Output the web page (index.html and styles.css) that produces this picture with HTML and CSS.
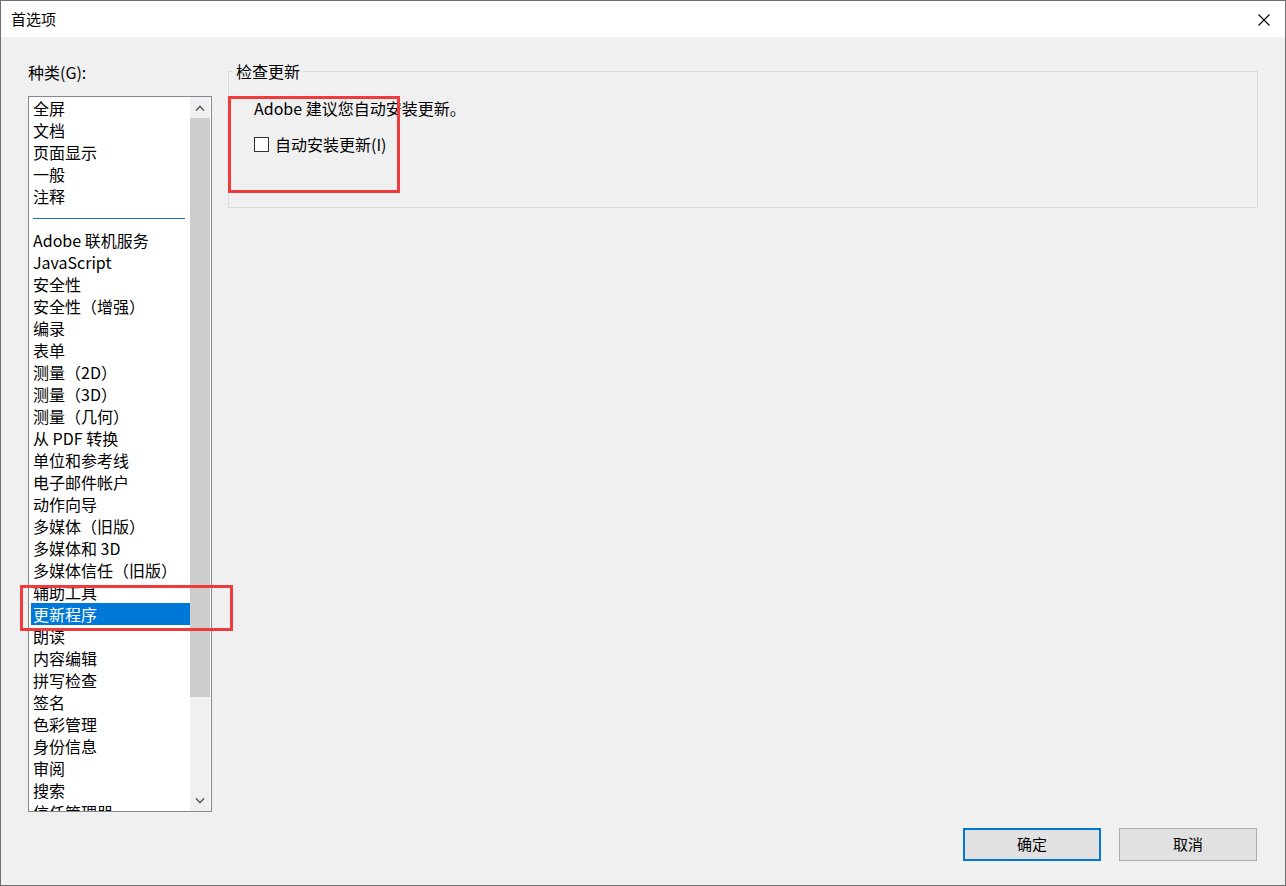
FILE: index.html
```html
<!DOCTYPE html>
<html lang="zh-CN">
<head>
    <meta charset="UTF-8">
    <title>首选项</title>
    <link rel="stylesheet" href="styles.css">
</head>
<body>
    <div class="window">
        <div class="titlebar">
            <span class="title">首选项</span>
            <svg class="close" width="12" height="12" viewBox="0 0 12 12">
                <path d="M0.5 0.5 L11.5 11.5 M11.5 0.5 L0.5 11.5" stroke="#000" stroke-width="1.1" fill="none"/>
            </svg>
        </div>

        <div class="main">
            <!-- category list -->
            <div class="left">
                <div class="label">种类(G):</div>
                <div class="listbox">
                    <div class="items">
                        <div class="item">全屏</div>
                        <div class="item">文档</div>
                        <div class="item">页面显示</div>
                        <div class="item">一般</div>
                        <div class="item">注释</div>
                        <div class="sep"></div>
                        <div class="item">Adobe 联机服务</div>
                        <div class="item">JavaScript</div>
                        <div class="item">安全性</div>
                        <div class="item">安全性（增强）</div>
                        <div class="item">编录</div>
                        <div class="item">表单</div>
                        <div class="item">测量（2D）</div>
                        <div class="item">测量（3D）</div>
                        <div class="item">测量（几何）</div>
                        <div class="item">从 PDF 转换</div>
                        <div class="item">单位和参考线</div>
                        <div class="item">电子邮件帐户</div>
                        <div class="item">动作向导</div>
                        <div class="item">多媒体（旧版）</div>
                        <div class="item">多媒体和 3D</div>
                        <div class="item">多媒体信任（旧版）</div>
                        <div class="item">辅助工具</div>
                        <div class="item selected">更新程序</div>
                        <div class="item">朗读</div>
                        <div class="item">内容编辑</div>
                        <div class="item">拼写检查</div>
                        <div class="item">签名</div>
                        <div class="item">色彩管理</div>
                        <div class="item">身份信息</div>
                        <div class="item">审阅</div>
                        <div class="item">搜索</div>
                        <div class="item">信任管理器</div>
                    </div>
                    <div class="scrollbar">
                        <div class="sb-btn">
                            <svg width="10" height="6" viewBox="0 0 10 6"><path d="M1 5.5 L5 1.5 L9 5.5" stroke="#606060" stroke-width="1.6" fill="none"/></svg>
                        </div>
                        <div class="sb-thumb"></div>
                        <div class="sb-track"></div>
                        <div class="sb-btn">
                            <svg width="10" height="6" viewBox="0 0 10 6"><path d="M1 0.5 L5 4.5 L9 0.5" stroke="#606060" stroke-width="1.6" fill="none"/></svg>
                        </div>
                    </div>
                </div>
            </div>

            <!-- settings panel -->
            <div class="right">
                <div class="group">
                    <span class="legend">检查更新</span>
                    <div class="line">Adobe 建议您自动安装更新。</div>
                    <label class="check">
                        <span class="box"></span>
                        <span>自动安装更新(I)</span>
                    </label>
                </div>
            </div>
        </div>

        <div class="footer">
            <button class="btn default">确定</button>
            <button class="btn">取消</button>
        </div>

        <!-- annotation marks -->
        <div class="mark mark-list"></div>
        <div class="mark mark-group"></div>
    </div>
</body>
</html>
```

FILE: styles.css
```css
* {
    margin: 0;
    padding: 0;
    box-sizing: border-box;
}

body {
    font-family: "Noto Sans CJK SC", "Noto Sans", sans-serif;
    font-size: 16px;
    color: #000;
    background: #f0f0f0;
}

.window {
    position: relative;
    width: 1286px;
    height: 886px;
    border: 1px solid #6f6f6f;
    background: #f0f0f0;
}

.titlebar {
    height: 36px;
    background: #fff;
    display: flex;
    align-items: center;
    justify-content: space-between;
    padding: 0 15px 0 10px;
}

.title {
    font-size: 15px;
    line-height: 20px;
}

.close {
    margin-top: 1px;
}

.main {
    display: flex;
    align-items: flex-start;
    height: 775px;
    padding-left: 27px;
}

/* left column */
.left {
    padding-top: 24px;
    width: 184px;
}

.label {
    line-height: 22px;
    margin-bottom: 13px;
}

.listbox {
    display: flex;
    height: 716px;
    border: 1px solid #828790;
    background: #fff;
    overflow: hidden;
}

.items {
    flex: 1;
    padding-left: 1px;
    overflow: hidden;
}

.item {
    height: 22px;
    line-height: 22px;
    padding-left: 3px;
    white-space: nowrap;
}

.item.selected {
    background: #0078d7;
    color: #fff;
    margin-left: 1px;
    padding-left: 2px;
}

.sep {
    height: 22px;
    display: flex;
    align-items: center;
    padding: 0 3px 0 3px;
}

.sep::before {
    content: "";
    display: block;
    width: 152px;
    height: 1px;
    background: #1c6fc0;
}

.scrollbar {
    width: 20px;
    margin-right: 1px;
    display: flex;
    flex-direction: column;
    background: #f0f0f0;
}

.sb-btn {
    height: 21px;
    display: flex;
    align-items: center;
    justify-content: center;
}

.sb-thumb {
    height: 579px;
    background: #cdcdcd;
}

.sb-track {
    flex: 1;
}

/* right panel */
.right {
    flex: 1;
    padding: 34px 27px 0 16px;
}

.group {
    position: relative;
    height: 137px;
    border: 1px solid #dcdcdc;
    padding: 25px 0 0 25px;
}

.legend {
    position: absolute;
    top: -12px;
    left: 4px;
    padding: 0 3px;
    background: #f0f0f0;
    line-height: 22px;
}

.line {
    line-height: 22px;
}

.check {
    display: flex;
    align-items: center;
    gap: 6px;
    margin-top: 14px;
    line-height: 22px;
}

.box {
    width: 15px;
    height: 15px;
    border: 1px solid #333;
    background: #fff;
}

/* buttons */
.footer {
    display: flex;
    justify-content: flex-end;
    gap: 18px;
    padding: 16px 28px 0 0;
}

.btn {
    width: 138px;
    height: 33px;
    font-family: inherit;
    font-size: 15px;
    line-height: 20px;
    padding-bottom: 2px;
    background: #e1e1e1;
    border: 1px solid #adadad;
    color: #000;
}

.btn.default {
    border: 2px solid #0078d7;
}

/* red annotation boxes */
.mark {
    position: absolute;
    border: 3px solid #ef3b3b;
}

.mark-list {
    left: 19px;
    top: 584px;
    width: 213px;
    height: 46px;
}

.mark-group {
    left: 227px;
    top: 95px;
    width: 172px;
    height: 97px;
}
```
